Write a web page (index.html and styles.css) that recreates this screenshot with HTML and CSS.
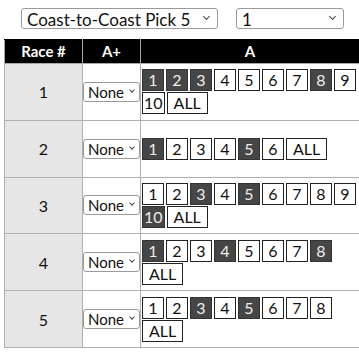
FILE: index.html
```html
<!DOCTYPE html>
<html lang="en">
<head>
    <meta charset="UTF-8">
    <meta name="viewport" content="width=device-width, initial-scale=1.0">
    <title>Pick 5 Ticket</title>
    <link rel="stylesheet" href="styles.css">
</head>
<body>
    <div class="wager-bar">
        <span class="pick pick-track">
            <select>
                <option>Coast-to-Coast Pick 5</option>
            </select>
        </span>
        <span class="pick pick-amount">
            <select>
                <option>1</option>
            </select>
        </span>
    </div>
    <table class="ticket">
        <colgroup>
            <col class="col-race">
            <col class="col-plus">
            <col class="col-a">
        </colgroup>
        <thead>
            <tr>
                <th>Race #</th>
                <th>A+</th>
                <th>A</th>
            </tr>
        </thead>
        <tbody id="legs"></tbody>
    </table>
    <script>
        const legs = [
            { race: 1, runners: 10, picked: [1, 2, 3, 8] },
            { race: 2, runners: 6, picked: [1, 5] },
            { race: 3, runners: 10, picked: [3, 5, 10] },
            { race: 4, runners: 8, picked: [1, 4, 8] },
            { race: 5, runners: 8, picked: [3, 5] }
        ];

        const body = document.getElementById('legs');

        legs.forEach(leg => {
            const row = document.createElement('tr');

            const raceCell = document.createElement('td');
            raceCell.className = 'race';
            raceCell.textContent = leg.race;
            row.appendChild(raceCell);

            const plusCell = document.createElement('td');
            plusCell.className = 'plus';
            plusCell.innerHTML = '<span class="pick pick-small"><select><option>None</option></select></span>';
            row.appendChild(plusCell);

            const aCell = document.createElement('td');
            aCell.className = 'runners';
            const list = document.createElement('div');
            list.className = 'runner-list';

            for (let i = 1; i <= leg.runners; i++) {
                const btn = document.createElement('span');
                btn.className = 'runner';
                if (leg.picked.includes(i)) {
                    btn.classList.add('selected');
                }
                btn.textContent = i;
                btn.addEventListener('click', () => btn.classList.toggle('selected'));
                list.appendChild(btn);
            }

            const all = document.createElement('span');
            all.className = 'runner all';
            all.textContent = 'ALL';
            list.appendChild(all);

            aCell.appendChild(list);
            row.appendChild(aCell);
            body.appendChild(row);
        });
    </script>
</body>
</html>
```

FILE: styles.css
```css
html {
    overflow: hidden;
}

body {
    margin: 0;
    padding: 8px 0 0 4px;
    font-family: Lato, "Open Sans", sans-serif;
    color: #111;
}

.wager-bar {
    display: flex;
    gap: 18px;
    padding-left: 17px;
    margin-bottom: 10px;
}

.pick {
    position: relative;
    display: inline-block;
}

.pick select {
    appearance: none;
    -webkit-appearance: none;
    width: 100%;
    height: 21px;
    margin: 0;
    padding: 0 0 0 5px;
    font-family: inherit;
    font-size: 17px;
    color: #111;
    background-color: #fff;
    border: 1px solid #9a9a9a;
    border-radius: 3px;
    outline: none;
}

.pick::after {
    content: "";
    position: absolute;
    right: 9px;
    top: 6px;
    width: 4px;
    height: 4px;
    border-right: 1px solid #444;
    border-bottom: 1px solid #444;
    transform: rotate(45deg);
    pointer-events: none;
}

.pick-track {
    width: 197px;
}

.pick-amount {
    width: 108px;
}

.pick-small {
    width: 57px;
}

.pick-small select {
    height: 20px;
    padding-left: 4px;
    font-size: 15px;
}

.pick-small::after {
    right: 6px;
    top: 6px;
    width: 3px;
    height: 3px;
}

.ticket {
    border-collapse: collapse;
    table-layout: fixed;
    width: 356px;
}

.col-race {
    width: 78px;
}

.col-plus {
    width: 58px;
}

.ticket th {
    background-color: #000;
    color: #fff;
    font-size: 15px;
    font-weight: bold;
    line-height: 17px;
    padding: 3px 0;
    border: 1px solid #a8a8a8;
    border-top-color: #000;
}

.ticket td {
    height: 55.8px;
    padding: 0 1px;
    border: 1px solid #b0b0b0;
    vertical-align: middle;
}

.ticket td.race {
    background-color: #e6e6e6;
    text-align: center;
    font-size: 16px;
}

.ticket td.plus {
    padding: 0;
}

.runner-list {
    display: flex;
    flex-wrap: wrap;
    gap: 1px 2px;
}

.runner {
    box-sizing: border-box;
    min-width: 22px;
    height: 22px;
    padding: 0 1px;
    font-size: 16px;
    line-height: 20px;
    text-align: center;
    background-color: #fff;
    border: 1px solid #222;
    cursor: pointer;
}

.runner.all {
    padding: 0 6px;
}

.selected {
    background-color: #464646;
    border-color: #333;
    color: #eee;
}
```
